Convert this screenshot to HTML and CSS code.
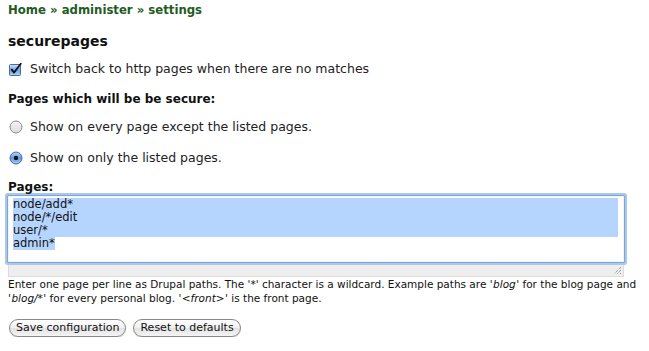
FILE: index.html
```html
<!DOCTYPE html>
<html>
<head>
<meta charset="utf-8">
<link rel="stylesheet" href="styles.css">
</head>
<body>
<div class="page">
  <div class="breadcrumb"><a>Home</a> » <a>administer</a> » <a>settings</a></div>
  <h2 class="title">securepages</h2>
  <div class="row check-row">
    <svg class="cb" width="13" height="13" viewBox="0 0 13 13">
      <defs>
        <linearGradient id="cbg" x1="0" y1="0" x2="0" y2="1">
          <stop offset="0" stop-color="#cfe3fb"/>
          <stop offset="0.5" stop-color="#6fa6e8"/>
          <stop offset="1" stop-color="#a9d0fa"/>
        </linearGradient>
      </defs>
      <rect x="0.5" y="1.5" width="11" height="11" rx="1" fill="url(#cbg)" stroke="#4a6d9a"/>
      <path d="M2.8 6.6 L5 9.6 L11.8 0.8" fill="none" stroke="#111" stroke-width="1.8" stroke-linecap="round" stroke-linejoin="round"/>
    </svg>
    <span>Switch back to http pages when there are no matches</span>
  </div>
  <div class="label">Pages which will be be secure:</div>
  <div class="row radio-row first-radio">
    <svg class="rd" width="14" height="14" viewBox="0 0 14 14">
      <defs>
        <linearGradient id="rg" x1="0" y1="0" x2="0" y2="1">
          <stop offset="0" stop-color="#f4f4f4"/>
          <stop offset="1" stop-color="#dcdcdc"/>
        </linearGradient>
      </defs>
      <circle cx="7" cy="7" r="6" fill="url(#rg)" stroke="#8a8a8a"/>
    </svg>
    <span>Show on every page except the listed pages.</span>
  </div>
  <div class="row radio-row">
    <svg class="rd" width="14" height="14" viewBox="0 0 14 14">
      <defs>
        <linearGradient id="rb" x1="0" y1="0" x2="0" y2="1">
          <stop offset="0" stop-color="#bcd8f7"/>
          <stop offset="0.5" stop-color="#5d9ae3"/>
          <stop offset="1" stop-color="#a8cff8"/>
        </linearGradient>
      </defs>
      <circle cx="7" cy="7" r="6" fill="url(#rb)" stroke="#4b6b95"/>
      <circle cx="7" cy="7" r="2.2" fill="#111"/>
    </svg>
    <span>Show on only the listed pages.</span>
  </div>
  <div class="label pages-label">Pages:</div>
  <div class="textarea-wrap">
    <div class="textarea">
      <div class="line sel">node/add*</div>
      <div class="line sel">node/*/edit</div>
      <div class="line sel">user/*</div>
      <div class="line"><span class="sel">admin*</span></div>
    </div>
    <div class="grippie">
      <svg class="grip" width="10" height="10" viewBox="0 0 10 10">
        <path d="M9 2 L2 9 M9 5 L5 9 M9 8 L8 9" stroke="#777" stroke-width="1" stroke-dasharray="1 1" fill="none"/>
      </svg>
    </div>
  </div>
  <div class="help"><span class="help-line">Enter one page per line as Drupal paths. The '*' character is a wildcard. Example paths are '<em>blog</em>' for the blog page and</span><span class="help-line">'<em>blog/*</em>' for every personal blog. '<em>&lt;front&gt;</em>' is the front page.</span></div>
  <div class="buttons">
    <button class="btn">Save configuration</button>
    <button class="btn">Reset to defaults</button>
  </div>
</div>
</body>
</html>
```
FILE: styles.css
```css
html, body {
  margin: 0;
  padding: 0;
  background: #fff;
}
body {
  font-family: "DejaVu Sans", Verdana, sans-serif;
  font-size: 12.5px;
  color: #222;
}
.page {
  padding: 3px 8px 0 8px;
}
.breadcrumb {
  font-weight: bold;
  font-size: 11.7px;
  color: #235b23;
  line-height: 15px;
}
.breadcrumb a {
  color: #235b23;
}
.title {
  font-size: 14px;
  font-weight: bold;
  color: #111;
  margin: 14px 0 0 0;
  line-height: 18px;
}
.row {
  display: flex;
  align-items: center;
  line-height: 16px;
}
.check-row {
  margin-top: 11px;
}
.cb {
  margin: 0 8px 0 1px;
  flex: none;
}
.rd {
  margin: 0 7px 0 1px;
  flex: none;
}
.label {
  font-weight: bold;
  font-size: 12px;
  color: #111;
  line-height: 16px;
  margin-top: 14px;
}
.radio-row {
  margin-top: 15px;
}
.first-radio {
  margin-top: 12px;
}
.pages-label {
  margin-top: 13px;
}
.textarea-wrap {
  margin: 0 16px 0 -1px;
}
.textarea {
  border: 1px solid #7ba7d6;
  box-shadow: 0 0 0 2px #a9c8ea, inset 0 0 1px #88b;
  background: #fff;
  padding: 2px 6px 12px 5px;
  font-size: 11.5px;
  line-height: 13px;
  color: #111;
  border-radius: 1px;
}
.line.sel, .sel {
  background: #b5d5ff;
}
.line span.sel {
  display: inline-block;
}
.grippie {
  margin: 2px 1px 0 1px;
  height: 11px;
  background: #eeeeee;
  border: 1px solid #dddddd;
  border-top: none;
  display: flex;
  justify-content: flex-end;
  align-items: flex-end;
}
.grip {
  margin: 0 1px 1px 0;
}
.help {
  font-size: 10.5px;
  line-height: 14px;
  margin-top: 0;
  color: #111;
}
.help-line {
  display: block;
  white-space: nowrap;
}
.help em {
  margin: 0 0.5px;
}
.buttons {
  display: flex;
  gap: 7px;
  margin-top: 14px;
  margin-left: 1px;
}
.btn {
  font-family: "DejaVu Sans", Verdana, sans-serif;
  font-size: 11px;
  height: 18px;
  padding: 0 6px;
  border: 1px solid #888;
  border-radius: 9px;
  background: linear-gradient(#fefefe, #f0f0f0 50%, #e2e2e2 51%, #f4f4f4);
  color: #111;
  line-height: 16px;
  box-shadow: 0 1px 1px rgba(0,0,0,0.15);
}
```
